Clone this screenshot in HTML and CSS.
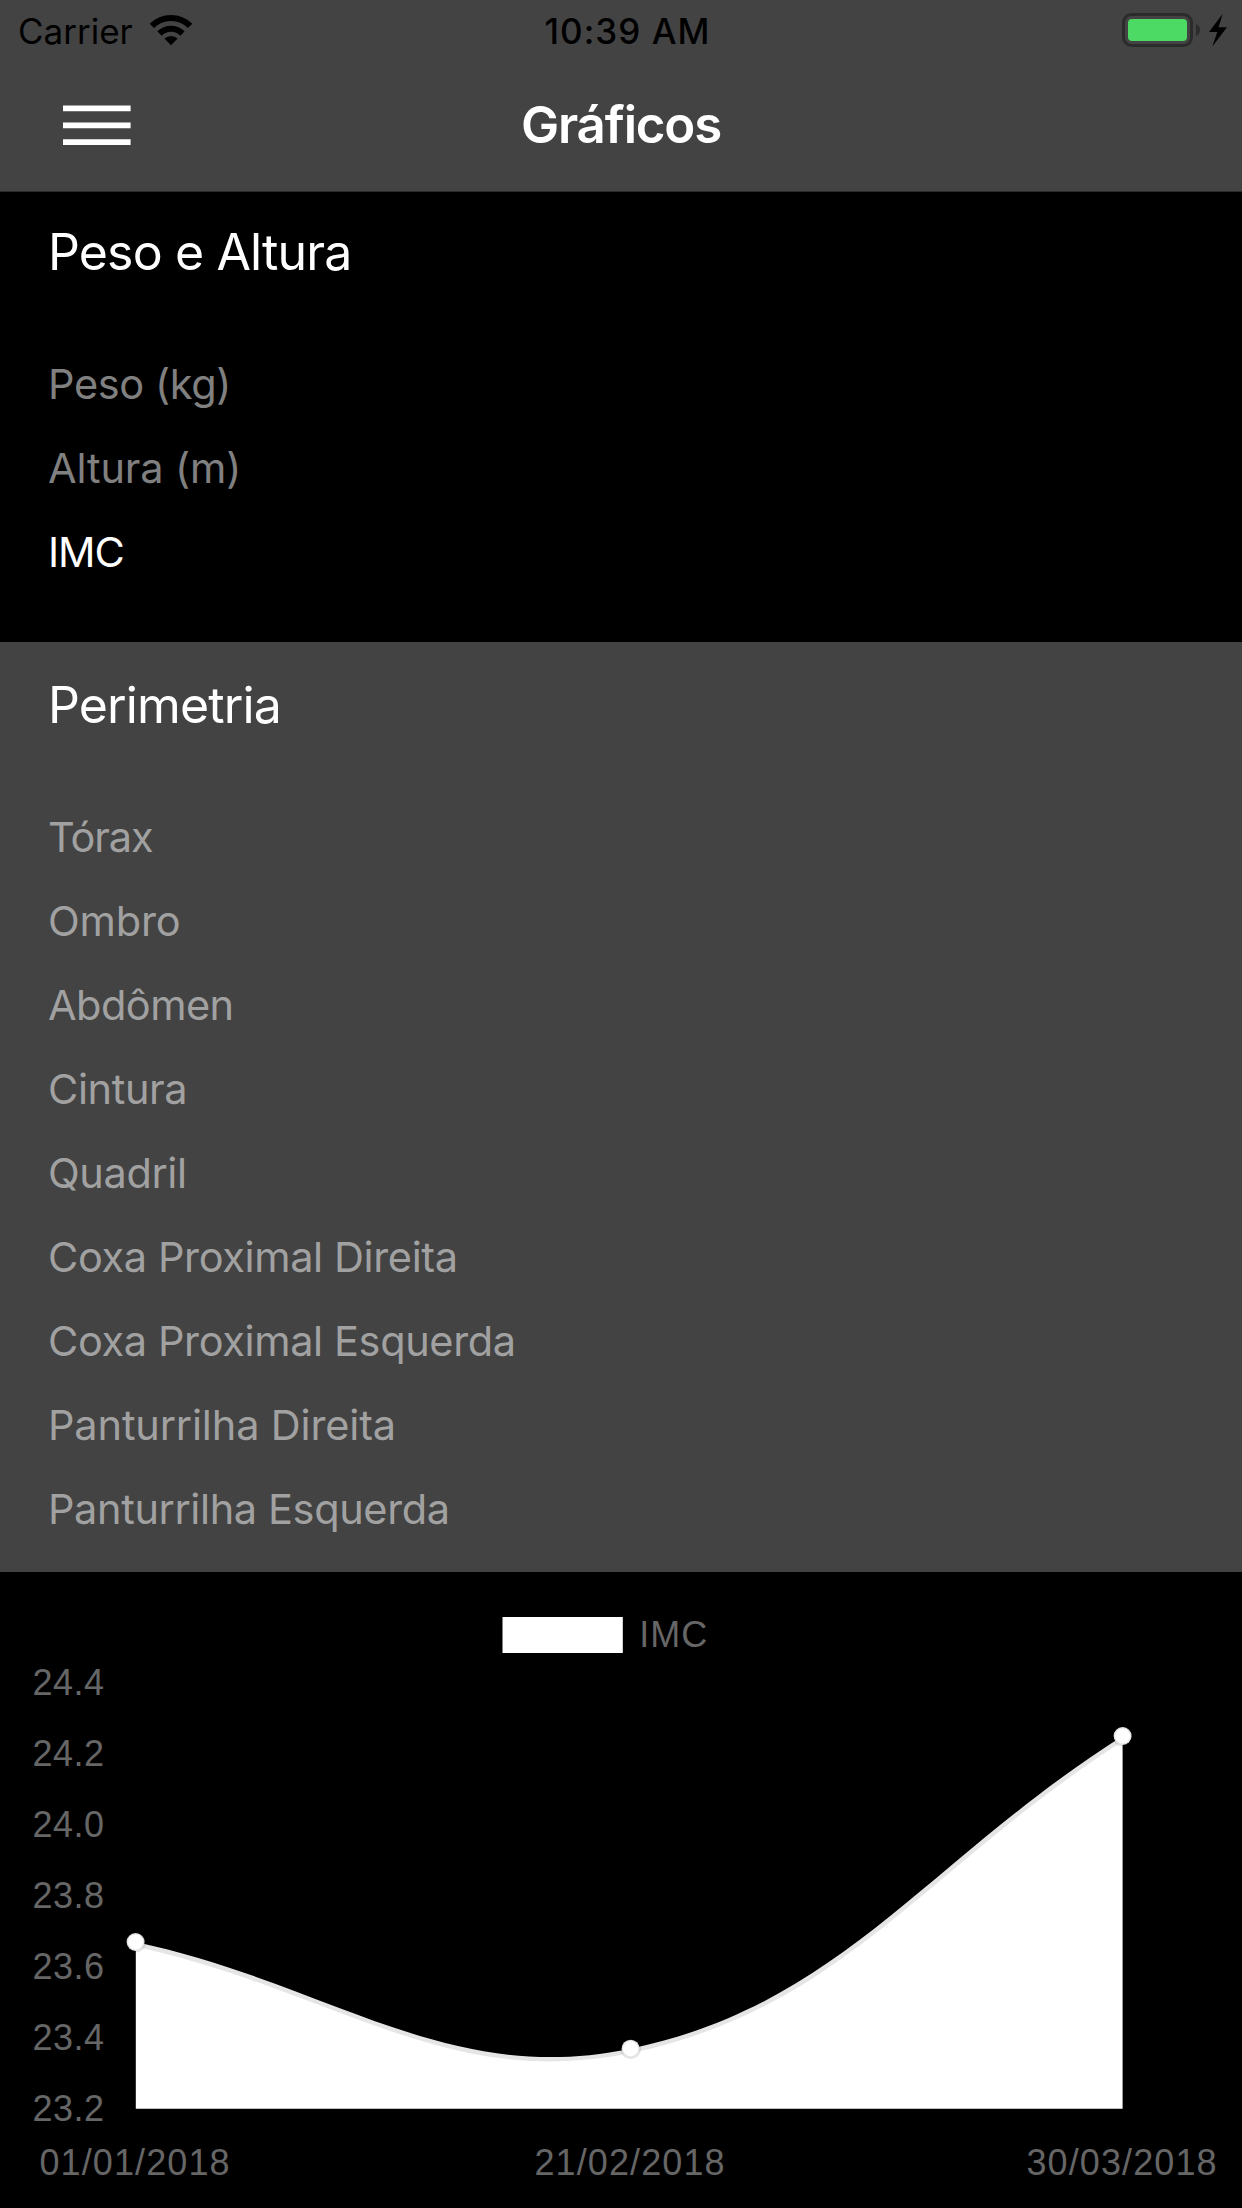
FILE: index.html
```
<!DOCTYPE html>
<html lang="pt-BR">
<head>
<meta charset="utf-8">
<title>Gráficos</title>
<link rel="stylesheet" href="styles.css">
</head>
<body>
<header class="header">
  <div class="status">
    <div class="status-left">
      <span class="carrier">Carrier</span>
      <svg class="wifi" width="44" height="32" viewBox="149 14 44 32" aria-hidden="true">
        <g fill="none" stroke="#000" stroke-width="6.2">
          <path d="M151.9 25.9A27 27 0 0 1 190.1 25.9"/>
          <path d="M159.5 33.5A16.3 16.3 0 0 1 182.5 33.5"/>
        </g>
        <path d="M171 45.2L164.4 38.6A9.4 9.4 0 0 1 177.6 38.6Z"/>
      </svg>
    </div>
    <div class="clock">10:39 AM</div>
    <div class="status-right">
      <svg width="108" height="36" viewBox="1121 12 108 36" aria-hidden="true">
        <rect x="1123.5" y="14.5" width="68" height="31" rx="8" fill="none" stroke="#2b2b2b" stroke-width="3"/>
        <rect x="1128" y="19" width="59" height="22" rx="4" fill="#4cd964"/>
        <path d="M1196 24C1201.3 26 1201.3 34 1196 36Z" fill="#2b2b2b"/>
        <path d="M1222.5 14L1209 32H1217.3L1212.3 46.5L1227 27.3H1218.6Z"/>
      </svg>
    </div>
  </div>
  <nav class="navbar">
    <svg class="menu" width="68" height="42" viewBox="0 0 68 42" aria-hidden="true">
      <path d="M0 .4h67.6v5.8H0zM0 17.4h67.6v5.8H0zM0 34.3h67.6v5.8H0z" fill="#fff"/>
    </svg>
    <h1 class="title">Gráficos</h1>
  </nav>
</header>
<main>
  <section class="group group-dark">
    <h2 class="group-title">Peso e Altura</h2>
    <ul class="options">
      <li>Peso (kg)</li>
      <li class="loose">Altura (m)</li>
      <li class="active tight">IMC</li>
    </ul>
  </section>
  <section class="group group-gray">
    <h2 class="group-title">Perimetria</h2>
    <ul class="options">
      <li class="tight">Tórax</li>
      <li class="loose">Ombro</li>
      <li class="snug">Abdômen</li>
      <li>Cintura</li>
      <li>Quadril</li>
      <li>Coxa Proximal Direita</li>
      <li>Coxa Proximal Esquerda</li>
      <li class="loose">Panturrilha Direita</li>
      <li>Panturrilha Esquerda</li>
    </ul>
  </section>
  <section class="chart">
    <svg class="chart-svg" width="1242" height="636" viewBox="0 1572 1242 636">
      <rect x="502.5" y="1617" width="120.3" height="36" fill="#fff"/>
      <text class="legend" x="639.3" y="1647">IMC</text>
      <g class="y-axis">
        <text x="32.5" y="1695">24.4</text>
        <text x="32.5" y="1766">24.2</text>
        <text x="32.5" y="1837">24.0</text>
        <text x="32.5" y="1908">23.8</text>
        <text x="32.5" y="1979">23.6</text>
        <text x="32.5" y="2050">23.4</text>
        <text x="32.5" y="2121">23.2</text>
      </g>
      <g class="x-axis">
        <text x="39.5" y="2175">01/01/2018</text>
        <text x="534.5" y="2175">21/02/2018</text>
        <text x="1026.5" y="2175">30/03/2018</text>
      </g>
      <path fill="#fff" d="M135.8 1942C333.4 1984.7 446.9 2087 630.4 2048.7C841.8 2004.6 925.7 1861.1 1122.6 1736V2108.8H135.8Z"/>
      <path class="line" d="M135.8 1942C333.4 1984.7 446.9 2087 630.4 2048.7C841.8 2004.6 925.7 1861.1 1122.6 1736"/>
      <g class="points">
        <circle cx="135.6" cy="1942" r="9"/>
        <circle cx="630.6" cy="2048.7" r="9"/>
        <circle cx="1122.6" cy="1736" r="9"/>
      </g>
    </svg>
  </section>
</main>
</body>
</html>
```
FILE: styles.css
```
* { box-sizing: border-box; margin: 0; padding: 0; }

body {
  width: 1242px;
  background: #000;
  color: #fff;
  font-family: Inter, "Liberation Sans", sans-serif;
}

svg { display: block; }

.header {
  height: 192px;
  background: #434343;
  border-bottom: 1px solid #2b2b2b;
}

.status {
  display: grid;
  grid-template-columns: 1fr auto 1fr;
  height: 60px;
  padding: 0 13px 0 18px;
  color: #000;
  font-size: 35px;
  line-height: 62px;
}

.status-left { display: flex; }
.wifi { margin: 14px 0 0 16px; }
.clock { padding-left: 8px; font-weight: 550; letter-spacing: 1px; }
.status-right { display: flex; justify-content: flex-end; padding-top: 12px; }

.navbar {
  display: grid;
  grid-template-columns: 1fr auto 1fr;
  height: 131px;
  padding: 0 63px;
}

.menu { margin-top: 45px; }

.title {
  font-size: 51px;
  font-weight: 600;
  line-height: 130px;
  letter-spacing: -1.2px;
}

.group { padding-left: 48px; }
.group-dark { padding-bottom: 48px; }
.group-gray { padding-top: 3px; padding-bottom: 21px; background: #434343; }

.group-title {
  margin-bottom: 30px;
  font-size: 50px;
  font-weight: 400;
  line-height: 120px;
  letter-spacing: -0.86px;
}

.options {
  list-style: none;
  font-size: 41.5px;
  line-height: 84px;
  letter-spacing: -0.38px;
}

.group-dark .options { color: #808080; }
.group-gray .options { color: #a1a1a1; }
.group-dark .options .active { color: #fff; }
.options .loose { letter-spacing: -0.15px; }
.options .snug { letter-spacing: -0.55px; }
.options .tight { letter-spacing: -1.1px; }

.chart { background: #000; }

.chart text {
  fill: #666;
  font: 36px "Liberation Sans", Arial, sans-serif;
}

.chart .legend { letter-spacing: 1px; }
.chart .y-axis text { letter-spacing: 0.45px; }
.chart .x-axis text { letter-spacing: 1.1px; }

.line { fill: none; stroke: rgba(0, 0, 0, 0.1); stroke-width: 9; }
.points circle { fill: #fff; stroke: rgba(0, 0, 0, 0.1); stroke-width: 3; }
```
